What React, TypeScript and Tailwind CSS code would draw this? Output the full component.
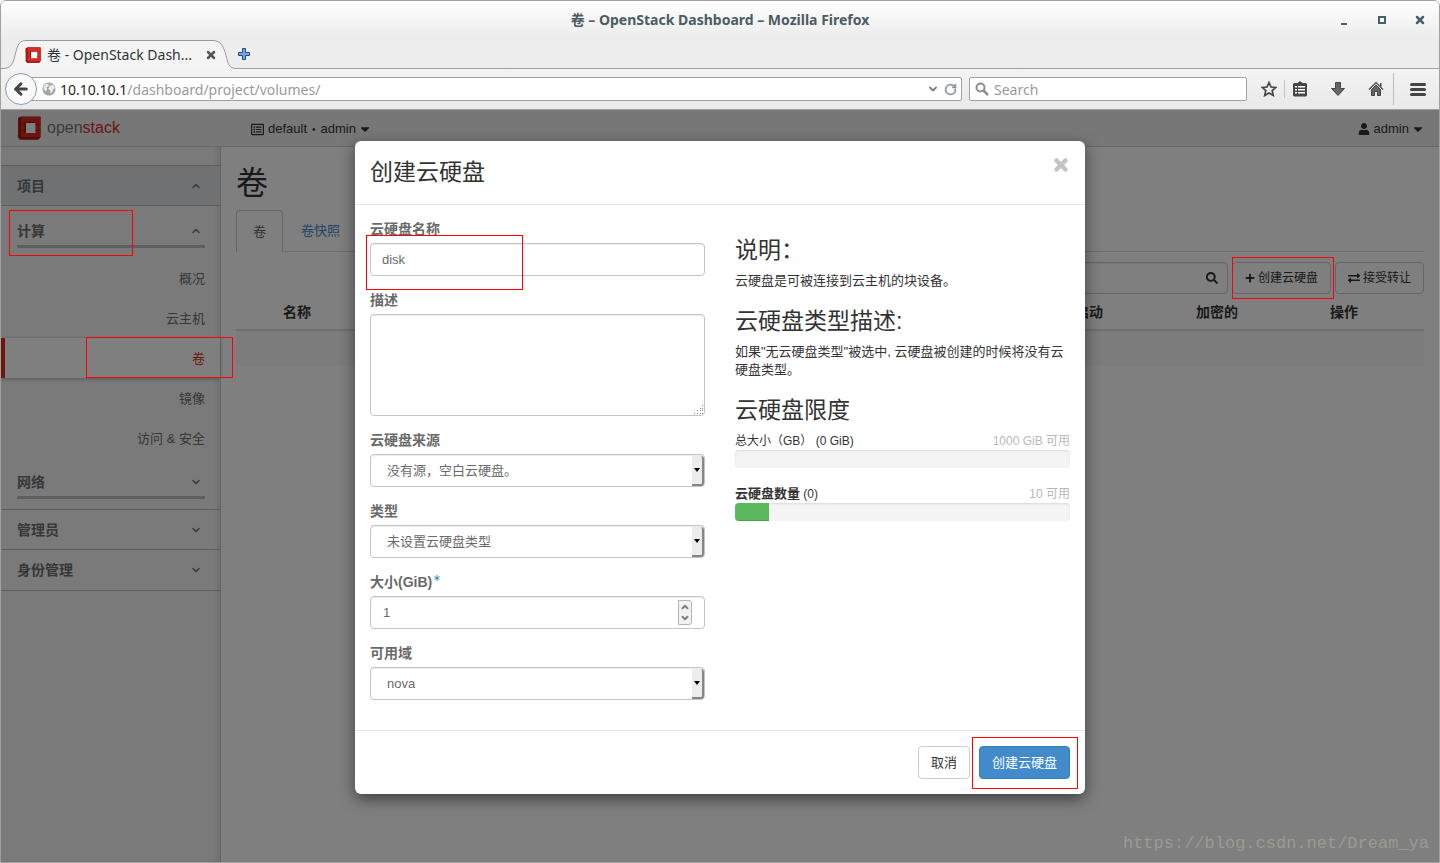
import type { ReactNode } from "react";
import clsx from "clsx";
import { FaAsterisk, FaCaretDown, FaExchangeAlt, FaPlus, FaRegListAlt, FaSearch, FaUser } from "react-icons/fa";
import { ArrowLeft, ChevronDown, ChevronUp, RotateCw, X } from "lucide-react";

const uiFont = "font-['Noto_Sans','Noto_Sans_CJK_SC',sans-serif]";
const pageFont = "font-['Liberation_Sans','Noto_Sans_CJK_SC',sans-serif]";

const computeItems = ["概况", "云主机", "卷", "镜像", "访问 & 安全"];

const controlClass =
  "block w-full rounded-[4px] border border-[#c4c4c4] bg-white text-[13px] text-[#6a6a6a] shadow-[inset_0_1px_1px_rgba(0,0,0,0.075)] outline-none";

function Mark({ className }: { className: string }) {
  return <span aria-hidden="true" className={clsx("pointer-events-none absolute z-30 border border-[#ff0000]", className)} />;
}

function Cube({ className }: { className: string }) {
  return (
    <svg viewBox="0 0 24 24" className={className} aria-hidden="true">
      <path d="M0 20l2-2v5z" fill="#bbb" />
      <path d="M1 2l3-1.5h19.5V21l-2 2.500H3L2 21z" fill="#8f1410" />
      <path d="M4 1h19.500v20H4z" fill="#dc2a22" />
      <path d="M1 2.500L4 1v20l-2 2-1-2z" fill="#a81a16" />
      <path d="M2 23.500L4.500 21h19L21 23.500z" fill="#a81a16" />
      <path d="M7.500 6h11v11h-11z" fill="#8f1410" />
      <path d="M9 7h9.500v10H9z" fill="#fff" />
      <path d="M1 9h3M1 15h3M4 8.500h3.500M4 14.500h3.500M18.500 8.500h5M18.500 14.500h5" stroke="#b01c18" strokeWidth="1" />
    </svg>
  );
}

function TitleBar() {
  return (
    <div className="relative flex h-9 items-center justify-center">
      <h1 className="pt-[2px] text-sm font-bold text-[#4c5c63]">卷 – OpenStack Dashboard – Mozilla Firefox</h1>
      <div className="absolute inset-y-0 right-[13px] flex items-center gap-[26px] pt-[2px] text-[#4b5f69]">
        <button aria-label="Minimize" className="flex h-3 w-3 items-end justify-center pb-[1px]">
          <span className="h-[2px] w-[6px] bg-current" />
        </button>
        <button aria-label="Maximize" className="flex h-3 w-3 items-center justify-center">
          <span className="h-2 w-2 border-2 border-current" />
        </button>
        <button aria-label="Close" className="flex h-3 w-3 items-center justify-center">
          <X className="h-3 w-3" strokeWidth={5} />
        </button>
      </div>
    </div>
  );
}

function TabStrip() {
  return (
    <div className="flex h-8 items-end border-b border-[#a0a0a0]">
      <div className="relative -mb-px h-[29px] w-[235px] shrink-0">
        <svg viewBox="0 0 235 29" className="absolute inset-0 h-full w-full" aria-hidden="true">
          <path d="M0 28.500h2c8 0 10-5 12-13S17 .5 25 .5h187c8 0 11 7 13 15s3 13 10 13V29H0z" fill="#f4f4f4" />
          <path d="M0 28.500h2c8 0 10-5 12-13S17 .5 25 .5h187c8 0 11 7 13 15s3 13 10 13" fill="none" stroke="#999" />
        </svg>
        <div className="relative flex h-full items-center pl-6 pr-[19px]">
          <Cube className="h-4 w-4 shrink-0" />
          <span className="ml-[6px] min-w-0 flex-1 whitespace-nowrap pt-px text-sm text-[#2e3436]">卷 - OpenStack Dash...</span>
          <button aria-label="Close tab" className="text-[#555]">
            <X className="h-3 w-3" strokeWidth={5} />
          </button>
        </div>
      </div>
      <button aria-label="New tab" className="flex h-7 w-4 items-center justify-center">
        <svg viewBox="0 0 12 12" className="h-3 w-3" aria-hidden="true">
          <path d="M4.500.5h3v4h4v3h-4v4h-3v-4h-4v-3h4z" fill="#7aa4dc" stroke="#204a87" />
        </svg>
      </button>
    </div>
  );
}

function NavBar() {
  return (
    <div className="flex h-[41px] items-center border-b border-[#a0a0a0] bg-linear-to-b from-[#f3f3f3] to-[#e9e9e9] pl-1 pr-[13px]">
      <button
        aria-label="Back"
        className="relative flex h-8 w-8 shrink-0 items-center justify-center rounded-full border border-[#8a9bb0] bg-[#fafafa] text-[#454545]"
      >
        <ArrowLeft className="h-[18px] w-[18px]" strokeWidth={4} />
      </button>
      <div className="-ml-2 flex h-6 flex-1 items-center rounded-r-[2px] border border-[#a0a0a0] bg-white pl-3 pr-1">
        <svg viewBox="0 0 16 16" className="h-[14px] w-[14px] shrink-0" aria-hidden="true">
          <circle cx="8" cy="8" r="7.500" fill="#a4a4a4" />
          <path d="M2 5l3-3 3 1-1 2-2 1 1 2-2 3-2-3zM9 4l4-1 2 4-2 1-1 3-2 2-1-4-2-1z" fill="#ececec" />
        </svg>
        <div
          role="textbox"
          aria-label="URL"
          contentEditable
          suppressContentEditableWarning
          className="ml-1 min-w-0 flex-1 whitespace-nowrap pt-px text-sm leading-5 text-[#999] outline-none"
        >
          <span className="text-[#1f1f1f]">10.10.10.1</span>/dashboard/project/volumes/
        </div>
        <ChevronDown className="h-3 w-3 text-[#808080]" strokeWidth={4} />
        <button aria-label="Reload" className="ml-[5px] text-[#8a9aa8]">
          <RotateCw className="h-[13px] w-[13px]" strokeWidth={3.5} />
        </button>
      </div>
      <div className="ml-[7px] flex h-6 w-[278px] items-center rounded-[2px] border border-[#a0a0a0] bg-white pl-[5px]">
        <svg viewBox="0 0 14 14" className="h-[14px] w-[14px] text-[#8f8f8f]" aria-hidden="true">
          <circle cx="5.500" cy="5.500" r="4" fill="none" stroke="currentColor" strokeWidth="2" />
          <path d="M8.500 8.500l4.500 4.500" stroke="currentColor" strokeWidth="2.500" />
        </svg>
        <input
          aria-label="Search"
          placeholder="Search"
          className="ml-[5px] min-w-0 flex-1 pt-px text-sm leading-5 outline-none placeholder:text-[#999]"
        />
      </div>
      <div className="ml-[14px] flex items-center text-[#454545]">
        <button aria-label="Bookmark">
          <svg viewBox="0 0 16 16" className="h-4 w-4" aria-hidden="true">
            <path
              d="M8 1.500l2 4.500 4.800.4-3.600 3.200 1.100 4.900L8 12l-4.300 2.500 1.100-4.900L1.200 6.400 6 6z"
              fill="none"
              stroke="currentColor"
              strokeWidth="1.700"
            />
          </svg>
        </button>
        <span className="ml-[7px] h-[18px] w-px bg-[#c4c4c4]" />
        <button aria-label="Bookmarks list" className="ml-[7px]">
          <svg viewBox="0 0 16 16" className="h-4 w-4" aria-hidden="true">
            <path d="M8 0l2.500 2H14l1 1v11.500l-1 1H2l-1-1V3l1-1h3.500z" fill="currentColor" />
            <path
              d="M3 5h2v1.500H3zM6 5h7v1.500H6zM3 8h2v1.500H3zM6 8h7v1.500H6zM3 11h2v1.500H3zM6 11h7v1.500H6z"
              fill="#fff"
            />
          </svg>
        </button>
        <button aria-label="Downloads" className="ml-[22px]">
          <svg viewBox="0 0 16 16" className="h-4 w-4" aria-hidden="true">
            <path d="M5.500 1.500h5v6h4L8 14.500 1.500 7.500h4z" fill="#666" stroke="currentColor" />
          </svg>
        </button>
        <button aria-label="Home" className="ml-[22px]">
          <svg viewBox="0 0 16 16" className="h-4 w-4" aria-hidden="true">
            <path d="M1 8.500l7-7 7 7" fill="none" stroke="currentColor" strokeWidth="1.200" />
            <path d="M12 2h1.500v4L12 4.500z" fill="currentColor" />
            <path d="M3.500 8.500L8 4l4.500 4.500v6h-3v-4h-3v4h-3z" fill="#666" stroke="currentColor" />
          </svg>
        </button>
        <span className="ml-[9px] h-8 w-px bg-[#b4bec9]" />
        <button aria-label="Menu" className="ml-4 flex flex-col gap-[2px]">
          <span className="h-[3px] w-4 rounded-full bg-current" />
          <span className="h-[3px] w-4 rounded-full bg-current" />
          <span className="h-[3px] w-4 rounded-full bg-current" />
        </button>
      </div>
    </div>
  );
}

function PageHeader() {
  return (
    <header className="flex h-[37px] items-center border-b border-[#d0d0d0] bg-[#eee] pl-4 pr-[14px] text-[13px] text-[#333]">
      <a href="#" className="flex w-[234px] items-center">
        <Cube className="h-6 w-6" />
        <span className="ml-[6px] text-base leading-6 text-[#777]">
          open<span className="text-[#da2a26]">stack</span>
        </span>
      </a>
      <button className="flex items-center pt-[2px]">
        <FaRegListAlt className="h-[13px] w-[13px]" />
        <span className="ml-1">default</span>
        <span className="mx-[5px] text-[10px]">•</span>
        <span>admin</span>
        <FaCaretDown className="ml-[2px] h-[14px] w-[14px]" />
      </button>
      <button className="ml-auto flex items-center pt-[2px]">
        <FaUser className="h-3 w-3" />
        <span className="ml-1">admin</span>
        <FaCaretDown className="ml-[2px] h-[14px] w-[14px]" />
      </button>
    </header>
  );
}

function SectionTitle({ title, open }: { title: string; open?: boolean }) {
  const Icon = open ? ChevronUp : ChevronDown;
  return (
    <button className="flex h-full w-full items-center justify-between pr-[3px] text-sm font-bold">
      {title}
      <Icon className="h-3 w-3" strokeWidth={3} />
    </button>
  );
}

function Sidebar() {
  return (
    <nav className="w-[220px] shrink-0 border-r border-[#ccc] bg-[#f5f5f5] pt-[18px] text-[#6e6e6e] shadow-[inset_-4px_0_6px_-2px_rgba(0,0,0,0.12)]">
      <div className="h-[41px] border-y border-[#bdbdbd] bg-[#dfe2e5] pl-4 pr-[15px]">
        <SectionTitle title="项目" open />
      </div>
      <div className="relative pl-4 pr-[15px] pt-[11px]">
        <Mark className="left-2 top-1 h-[46px] w-[124px]" />
        <div className="h-[31px] border-b-[3px] border-[#bfbfbf]">
          <SectionTitle title="计算" open />
        </div>
      </div>
      <ul className="pt-[10px] text-[13px]">
        {computeItems.map((item) => (
          <li key={item} className="relative">
            <a
              href="#"
              className={clsx(
                "flex h-10 items-center justify-end pr-[15px] pt-px",
                item === "卷" && "border-l-4 border-[#d9301f] bg-white text-[#d9301f] shadow-[0_1px_4px_rgba(0,0,0,0.3)]"
              )}
            >
              {item}
            </a>
            {item === "卷" && <Mark className="-right-[13px] -top-px h-[41px] w-[147px]" />}
          </li>
        ))}
      </ul>
      <div className="pb-[10px] pl-4 pr-[15px] pt-[10px]">
        <div className="h-[31px] border-b-[3px] border-[#bfbfbf]">
          <SectionTitle title="网络" />
        </div>
      </div>
      <div className="h-10 border-t border-[#bdbdbd] pl-4 pr-[15px]">
        <SectionTitle title="管理员" />
      </div>
      <div className="h-[42px] border-y border-[#bdbdbd] pl-4 pr-[15px]">
        <SectionTitle title="身份管理" />
      </div>
    </nav>
  );
}

function ToolButton({ icon, children }: { icon: ReactNode; children: ReactNode }) {
  return (
    <button className="flex h-8 items-center gap-[3px] whitespace-nowrap rounded-[4px] border border-[#ccc] bg-white px-3 text-xs">
      {icon}
      {children}
    </button>
  );
}

function Volumes() {
  return (
    <main className="min-w-0 flex-1 bg-white px-[15px] text-[#333]">
      <h2 className="pt-[18px] text-[32px] leading-[36px]">卷</h2>
      <div className="mt-[9px] flex h-[42px] border-b border-[#ddd] text-[13px]">
        <a href="#" className="-mb-px mr-px flex items-center rounded-t-[4px] border border-b-0 border-[#ccc] bg-white px-4 text-[#666]">
          卷
        </a>
        <a href="#" className="flex items-center border border-transparent px-4 text-[#428bca]">
          卷快照
        </a>
      </div>
      <div className="flex justify-end gap-1 pt-[10px]">
        <div className="relative w-[240px]">
          <input
            aria-label="筛选"
            className="h-8 w-full rounded-[4px] border border-[#ccc] bg-white pl-3 pr-8 shadow-[inset_0_1px_1px_rgba(0,0,0,0.075)]"
          />
          <FaSearch className="absolute right-[10px] top-[10px] h-3 w-3" />
        </div>
        <div className="relative">
          <Mark className="-bottom-[5px] -right-[3px] -top-[5px] left-0" />
          <ToolButton icon={<FaPlus className="h-[10px] w-[10px]" />}>创建云硬盘</ToolButton>
        </div>
        <ToolButton icon={<FaExchangeAlt className="h-3 w-3" />}>接受转让</ToolButton>
      </div>
      <table className="w-full table-fixed text-left text-sm">
        <thead>
          <tr className="h-[36px] border-b-2 border-[#ddd]">
            <td className="w-[39px]" />
            <th className="px-2">名称</th>
            <th className="w-[135px] px-2">可启动</th>
            <th className="w-[134px] px-2">加密的</th>
            <th className="w-[102px] px-2">操作</th>
          </tr>
        </thead>
        <tbody>
          <tr className="h-[35px] bg-[#f9f9f9]">
            <td colSpan={5} />
          </tr>
        </tbody>
      </table>
    </main>
  );
}

function Field({ id, label, required, children }: { id: string; label: string; required?: boolean; children: ReactNode }) {
  return (
    <div className="mb-[15px]">
      <label htmlFor={id} className="mb-[5px] flex h-[18px] text-sm font-bold leading-[18px] text-[#6a6a6a]">
        {label}
        {required && <FaAsterisk className="ml-[2px] mt-[2px] h-[6px] w-[6px] text-[#428bca]" />}
      </label>
      {children}
    </div>
  );
}

function SelectBox({ id, option }: { id: string; option: string }) {
  return (
    <div className="relative">
      <select id={id} className={clsx(controlClass, "h-[33px] appearance-none pl-4 pr-5")}>
        <option>{option}</option>
      </select>
      <span className="pointer-events-none absolute bottom-px right-px top-[2px] flex w-3 items-center justify-center rounded-r-[3px] border-b-2 border-r-2 border-[#868686] bg-[#ececec]">
        <span className="border-x-[3px] border-t-[4px] border-x-transparent border-t-black" />
      </span>
    </div>
  );
}

function VolumeForm() {
  return (
    <div>
      <div className="relative">
        <Field id="name" label="云硬盘名称">
          <input id="name" defaultValue="disk" className={clsx(controlClass, "h-[33px] px-[11px]")} />
        </Field>
        <Mark className="-left-1 top-[15px] h-[55px] w-[157px]" />
      </div>
      <Field id="description" label="描述">
        <div className="relative">
          <textarea id="description" className={clsx(controlClass, "h-[102px] resize-none px-3 py-[6px]")} />
          <svg viewBox="0 0 10 10" className="pointer-events-none absolute bottom-px right-px h-[10px] w-[10px]" aria-hidden="true">
            <path
              d="M8 0h1v1H8zM6 3h1v1H6zM8 3h1v1H8zM3 5h1v1H3zM6 5h1v1H6zM8 5h1v1H8zM0 8h1v1H0zM3 8h1v1H3zM6 8h1v1H6zM8 8h1v1H8z"
              fill="#888"
            />
          </svg>
        </div>
      </Field>
      <Field id="source" label="云硬盘来源">
        <SelectBox id="source" option="没有源，空白云硬盘。" />
      </Field>
      <Field id="type" label="类型">
        <SelectBox id="type" option="未设置云硬盘类型" />
      </Field>
      <Field id="size" label="大小(GiB)" required>
        <div className="relative">
          <input
            id="size"
            type="number"
            defaultValue={1}
            className={clsx(controlClass, "h-[33px] px-3 [appearance:textfield] [&::-webkit-inner-spin-button]:appearance-none")}
          />
          <span className="pointer-events-none absolute inset-y-[4px] right-[13px] flex w-[14px] flex-col items-center justify-around rounded-r-[3px] border border-[#b4b4b4] bg-[#f2f2f2] text-[#808080]">
            <ChevronUp className="h-[10px] w-[10px]" strokeWidth={5} />
            <ChevronDown className="h-[10px] w-[10px]" strokeWidth={5} />
          </span>
        </div>
      </Field>
      <Field id="zone" label="可用域">
        <SelectBox id="zone" option="nova" />
      </Field>
    </div>
  );
}

function Quota({ title, left, used }: { title: ReactNode; left: string; used: number }) {
  return (
    <div className="mb-[17px]">
      <div className="flex justify-between text-xs leading-[18px]">
        <span>{title}</span>
        <span className="text-[#b8b8b8]">{left}</span>
      </div>
      <div className="h-[18px] overflow-hidden rounded-[4px] bg-[#f4f4f4] shadow-[inset_0_1px_2px_rgba(0,0,0,0.1)]">
        <div className="h-full bg-[#5cb85c] shadow-[inset_0_-1px_0_rgba(0,0,0,0.15)]" style={{ width: `${used}%` }} />
      </div>
    </div>
  );
}

function Description() {
  const heading = "mb-[9px] text-[23px] leading-[26px]";
  return (
    <div className="pt-[17px] text-[13px] leading-[18px] text-[#333]">
      <h3 className={heading}>说明：</h3>
      <p className="mb-[18px]">云硬盘是可被连接到云主机的块设备。</p>
      <h3 className={heading}>云硬盘类型描述:</h3>
      <p className="mb-[18px]">如果"无云硬盘类型"被选中, 云硬盘被创建的时候将没有云硬盘类型。</p>
      <h3 className={heading}>云硬盘限度</h3>
      <Quota title="总大小（GB） (0 GiB)" left="1000 GiB 可用" used={0} />
      <Quota
        title={
          <>
            <strong className="text-[13px]">云硬盘数量</strong> (0)
          </>
        }
        left="10 可用"
        used={10}
      />
    </div>
  );
}

function CreateVolumeDialog() {
  return (
    <div
      role="dialog"
      aria-labelledby="dialog-title"
      className="w-[730px] rounded-[6px] bg-white shadow-[0_5px_15px_rgba(0,0,0,0.5)]"
    >
      <div className="flex h-16 items-start justify-between border-b border-[#e5e5e5] px-[15px] pt-[15px]">
        <h2 id="dialog-title" className="text-[23px] leading-8 text-[#333]">创建云硬盘</h2>
        <button aria-label="Close" className="text-[#c4c4c4]">
          <X className="h-[18px] w-[18px]" strokeWidth={6} />
        </button>
      </div>
      <div className="grid grid-cols-2 gap-[30px] p-[15px] pb-0">
        <VolumeForm />
        <Description />
      </div>
      <div className="mt-[15px] flex justify-end gap-[9px] border-t border-[#e5e5e5] p-[15px] text-[13px]">
        <button className="h-[33px] rounded-[4px] border border-[#ccc] bg-white px-3 text-[#333]">取消</button>
        <div className="relative">
          <button className="h-[33px] rounded-[4px] border border-[#357ebd] bg-[#428bca] px-3 text-white">创建云硬盘</button>
          <Mark className="-bottom-[10px] -left-[7px] -right-2 -top-[9px]" />
        </div>
      </div>
    </div>
  );
}

export default function App() {
  return (
    <div className={clsx("flex min-h-screen flex-col overflow-hidden rounded-t-[6px] border border-[#a0a0a0]", uiFont)}>
      <div className="bg-linear-to-b from-white to-[#ededed] to-50%">
        <TitleBar />
        <TabStrip />
      </div>
      <NavBar />
      <div className={clsx("relative flex flex-1 flex-col", pageFont)}>
        <PageHeader />
        <div className="flex flex-1">
          <Sidebar />
          <Volumes />
        </div>
        <div className="absolute inset-0 z-10 bg-black/50" />
        <div className="absolute inset-x-0 top-[31px] z-20 flex justify-center">
          <CreateVolumeDialog />
        </div>
        <div className="absolute bottom-[6px] right-[10px] z-10 font-['Liberation_Mono',monospace] text-[17px] leading-6 text-[#9b9b91]">
          https://blog.csdn.net/Dream_ya
        </div>
      </div>
    </div>
  );
}
